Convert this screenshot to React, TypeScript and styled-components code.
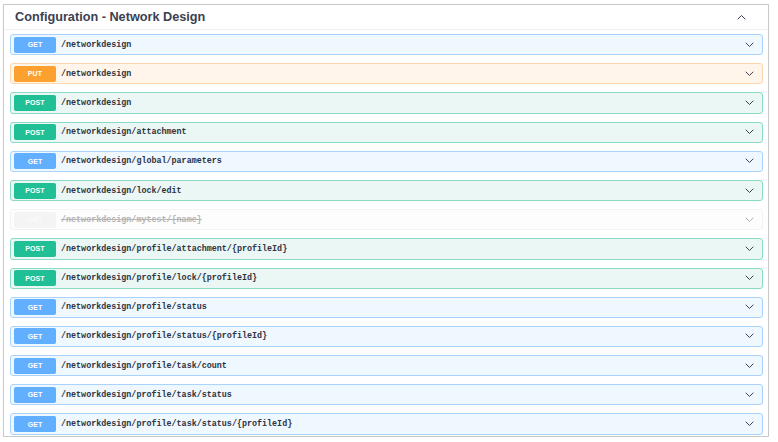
import React from 'react'
import styled, { createGlobalStyle } from 'styled-components'

type Method = 'GET' | 'PUT' | 'POST'

interface IEndpoint {
    method: Method
    path: string
    deprecated?: boolean
}

const methodColors: Record<Method, { main: string; bg: string; border: string }> = {
    GET: { main: '#61affe', bg: '#eff7ff', border: '#a9d3fc' },
    PUT: { main: '#fca130', bg: '#fff5ea', border: '#fcd6a8' },
    POST: { main: '#21bf95', bg: '#ebf7f4', border: '#88dbc5' },
}

const endpoints: IEndpoint[] = [
    { method: 'GET', path: '/networkdesign' },
    { method: 'PUT', path: '/networkdesign' },
    { method: 'POST', path: '/networkdesign' },
    { method: 'POST', path: '/networkdesign/attachment' },
    { method: 'GET', path: '/networkdesign/global/parameters' },
    { method: 'POST', path: '/networkdesign/lock/edit' },
    { method: 'GET', path: '/networkdesign/mytest/{name}', deprecated: true },
    { method: 'POST', path: '/networkdesign/profile/attachment/{profileId}' },
    { method: 'POST', path: '/networkdesign/profile/lock/{profileId}' },
    { method: 'GET', path: '/networkdesign/profile/status' },
    { method: 'GET', path: '/networkdesign/profile/status/{profileId}' },
    { method: 'GET', path: '/networkdesign/profile/task/count' },
    { method: 'GET', path: '/networkdesign/profile/task/status' },
    { method: 'GET', path: '/networkdesign/profile/task/status/{profileId}' },
]

const GlobalStyle = createGlobalStyle`
    html, body {
        margin: 0;
        padding: 0;
        background: #ffffff;
    }
    body {
        font-family: "Liberation Sans", Arial, sans-serif;
    }
`

const StyledFrame = styled.div`
    box-sizing: border-box;
    margin: 4px 0 0 3px;
    width: 766px;
    height: 433px;
    border: 1px solid #c9c9c9;
    border-radius: 1px;
    background: #ffffff;
    box-shadow: 0 0 1px rgba(0, 0, 0, .15);
`

const StyledHeader = styled.div`
    display: flex;
    align-items: center;
    justify-content: space-between;
    height: 24px;
    padding: 0 22px 0 11px;
    border-bottom: 1px solid #eef0f2;
`

const StyledTitle = styled.h4`
    margin: 0;
    font-size: 12.7px;
    font-weight: 700;
    color: #3b4151;
`

const StyledList = styled.div`
    display: flex;
    flex-direction: column;
    gap: 8px;
    padding: 4px 5px 0 6px;
`

const StyledRow = styled.div<{ $method: Method; $deprecated?: boolean }>`
    box-sizing: border-box;
    display: flex;
    align-items: center;
    height: 21.2px;
    padding: 0 8px 0 3px;
    border-radius: 3px;
    border: 1px solid ${p => p.$deprecated ? '#f3f3f3' : methodColors[p.$method].border};
    background: ${p => p.$deprecated ? '#fdfdfd' : methodColors[p.$method].bg};
`

const StyledBadge = styled.span<{ $method: Method; $deprecated?: boolean }>`
    display: flex;
    align-items: center;
    justify-content: center;
    width: 42px;
    height: 16px;
    border-radius: 2px;
    background: ${p => p.$deprecated ? '#f4f4f4' : methodColors[p.$method].main};
    color: ${p => p.$deprecated ? '#fafafa' : '#ffffff'};
    font-size: 7px;
    font-weight: 700;
    letter-spacing: .1px;
`

const StyledPath = styled.span<{ $deprecated?: boolean }>`
    flex: 1;
    margin-left: 5px;
    font-family: "Liberation Mono", "Courier New", monospace;
    font-size: 8.4px;
    font-weight: 700;
    color: ${p => p.$deprecated ? '#b4b4b4' : '#2f3441'};
    text-decoration: ${p => p.$deprecated ? 'line-through' : 'none'};
`

const Chevron = ({ up, faded }: { up?: boolean; faded?: boolean }) => (
    <svg width="9" height="6" viewBox="0 0 9 6" fill="none">
        <path
            d={up ? 'M1 5 L4.5 1.5 L8 5' : 'M1 1 L4.5 4.5 L8 1'}
            stroke={faded ? '#b0b0b0' : '#3b4151'}
            strokeWidth="1"
            strokeLinecap="round"
            strokeLinejoin="round"
        />
    </svg>
)

const App = () => {
    return (
        <>
            <GlobalStyle />
            <StyledFrame>
                <StyledHeader>
                    <StyledTitle>Configuration - Network Design</StyledTitle>
                    <Chevron up />
                </StyledHeader>
                <StyledList>
                    {endpoints.map((ep, index) => {
                        return (
                            <StyledRow key={index} $method={ep.method} $deprecated={ep.deprecated}>
                                <StyledBadge $method={ep.method} $deprecated={ep.deprecated}>{ep.method}</StyledBadge>
                                <StyledPath $deprecated={ep.deprecated}>{ep.path}</StyledPath>
                                <Chevron faded={ep.deprecated} />
                            </StyledRow>
                        )
                    })}
                </StyledList>
            </StyledFrame>
        </>
    )
}

export default App
